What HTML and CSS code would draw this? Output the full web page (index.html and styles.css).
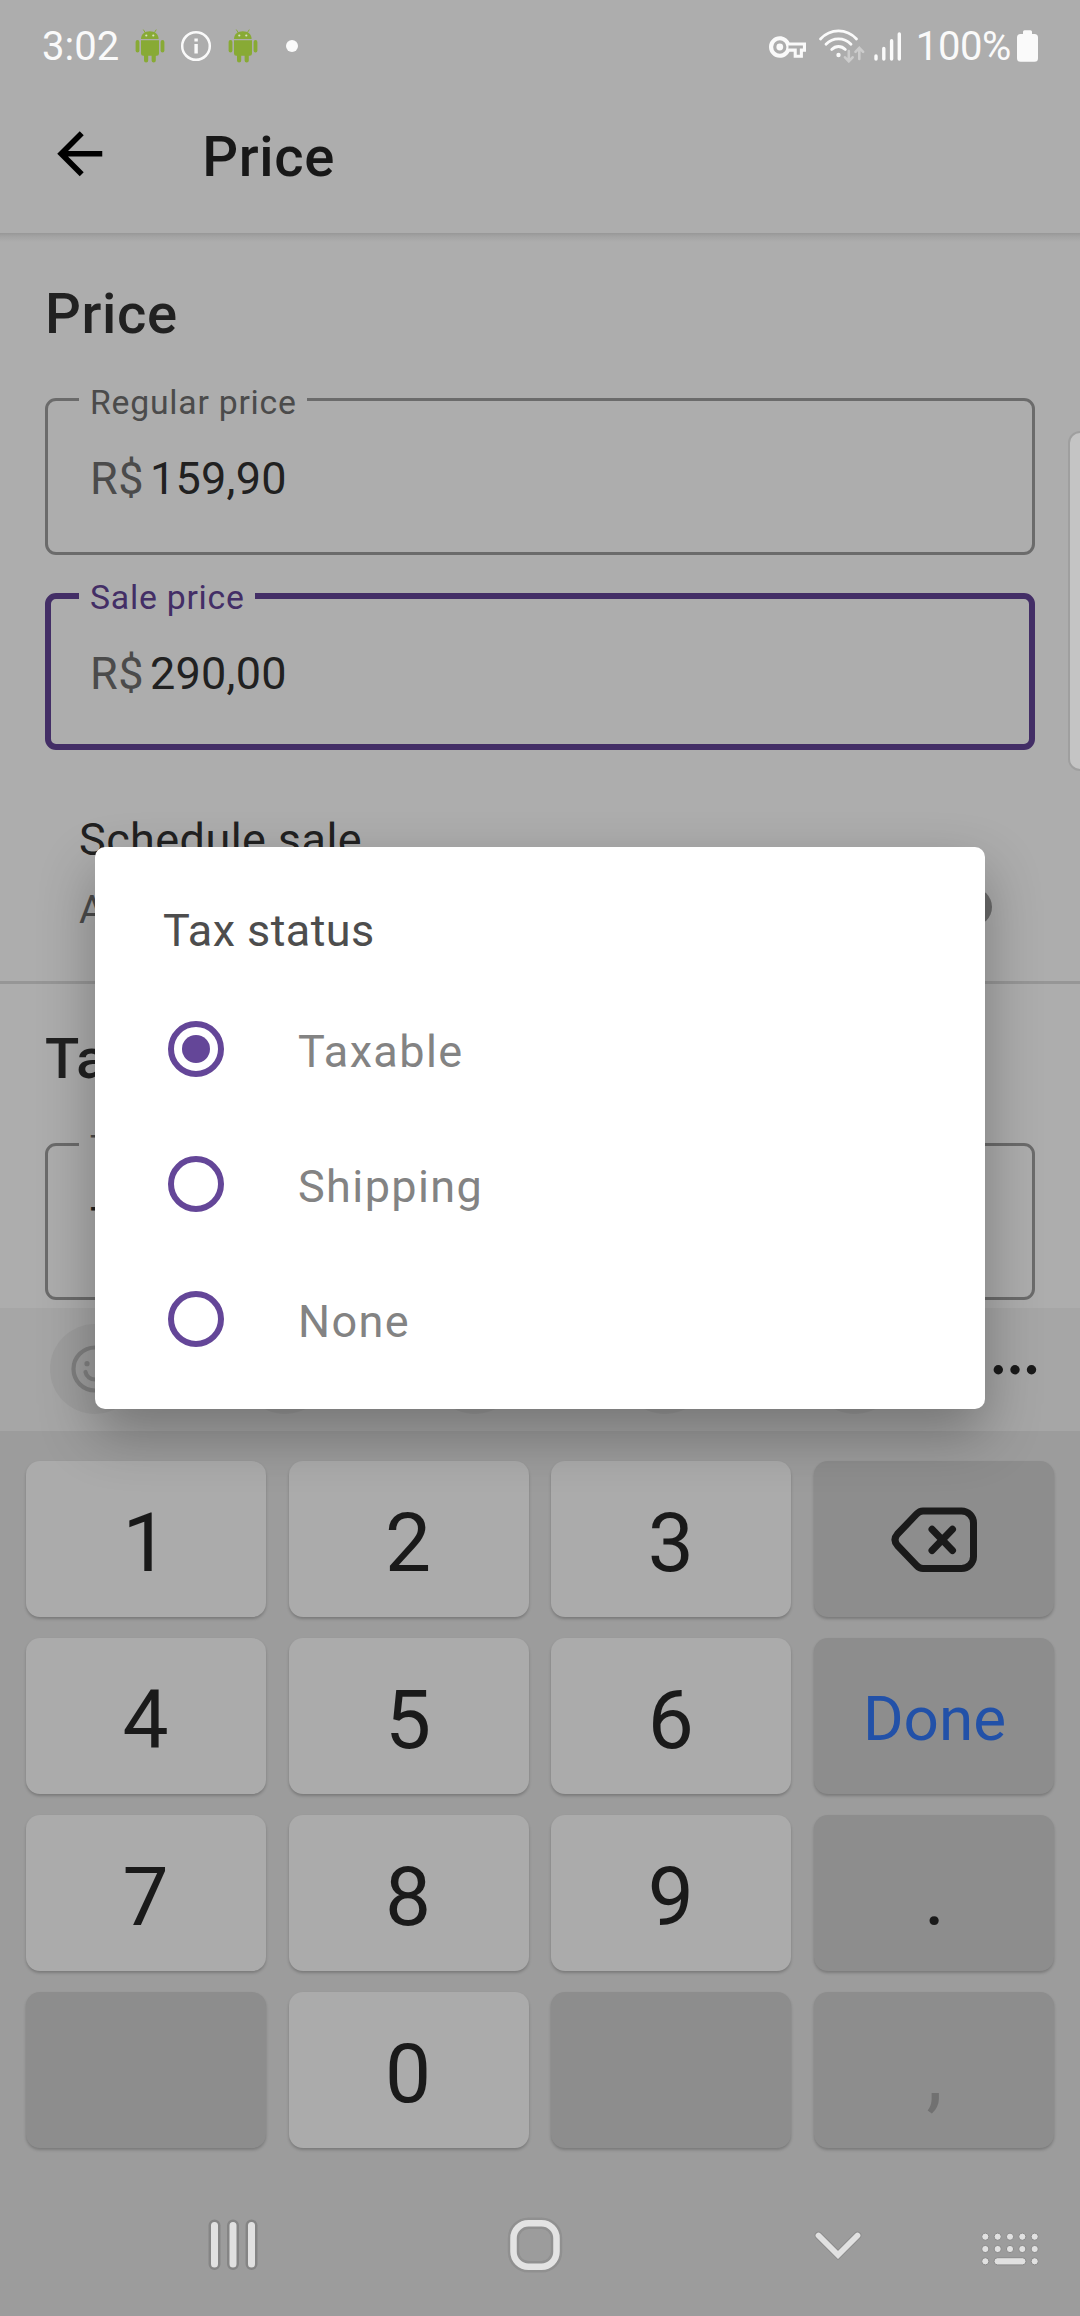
FILE: index.html
```html
<!DOCTYPE html>
<html lang="en">
<head>
<meta charset="utf-8">
<title>Price</title>
<link rel="stylesheet" href="styles.css">
</head>
<body>
<svg class="defs" width="0" height="0" aria-hidden="true">
  <symbol id="android" viewBox="0 0 30 34">
    <path d="M6 10C6 5 10 2.3 14.8 2.3S23.600 5 23.600 10Z"/>
    <path d="M8.300.6l1.900 3M21.300.6l-1.900 3" stroke="#88aa35" stroke-width="1" fill="none"/>
    <circle cx="11.300" cy="6.500" r="1.100" fill="#d8e2c0"/><circle cx="18.300" cy="6.500" r="1.100" fill="#d8e2c0"/>
    <path d="M6 11.200h18V24.500a2.200 2.200 0 0 1-2.200 2.200H20.800V31.500a2 2 0 0 1-4.200 0V26.700H13.200V31.500a2 2 0 0 1-4.200 0V26.700H8.200A2.200 2.200 0 0 1 6 24.500Z"/>
    <rect x=".6" y="11" width="3.800" height="12.500" rx="1.900"/><rect x="25.600" y="11" width="3.800" height="12.500" rx="1.900"/>
  </symbol>
</svg>

<main class="screen">
  <header class="status">
    <span class="clock">3:02</span>
    <svg class="droid" width="30" height="34"><use href="#android"/></svg>
    <svg class="info" width="32" height="32" viewBox="0 0 32 32"><circle cx="16" cy="16" r="13.800" fill="none" stroke="#fafafa" stroke-width="2.500"/><path d="M14.400 8.500h3.400v3h-3.400zM14.400 14h3.400v9.500h-3.400z" fill="#fafafa"/></svg>
    <svg class="droid" width="30" height="34"><use href="#android"/></svg>
    <i class="more-dot"></i>
    <div class="status-right">
      <svg class="key-icon" width="37" height="22" viewBox="0 5 24 14"><path fill="#fafafa" fill-rule="evenodd" d="M22 19h-6v-4h-2.680c-1.140 2.420-3.600 4-6.320 4-3.860 0-7-3.140-7-7s3.140-7 7-7c2.720 0 5.170 1.580 6.320 4H24v6h-2v4zm-4-2h2v-4h2v-2H11.940l-.23-.67C11.010 8.340 9.110 7 7 7c-2.760 0-5 2.240-5 5s2.240 5 5 5c2.110 0 4.010-1.340 4.710-3.330l.23-.67H18v4z"/><circle cx="7" cy="12" r="5" fill="none" stroke="#fafafa" stroke-width="1.400"/><circle cx="7" cy="12" r="2.200" fill="#fafafa"/></svg>
      <svg class="wifi" width="47" height="34" viewBox="0 0 47 34" fill="none" stroke="#fafafa" stroke-width="2.800" stroke-linecap="round"><path d="M2.500 10C12.500-.8 28.500-.8 38.500 10M8 15.200c7-7.200 18-7.200 25 0M13.700 20.500c4-4 9.600-4 13.600 0"/><circle cx="20.500" cy="26" r="2.200" fill="#fafafa" stroke="none"/><g stroke="#cccccc" stroke-width="2.600"><path d="M30.800 22v10M27 28.300l3.800 4 3.800-4M41.300 30V20M37.500 22.800l3.800-4 3.800 4"/></g></svg>
      <svg class="signal" width="28" height="32" viewBox="0 0 28 32" stroke="#fafafa" stroke-width="3.400" stroke-linecap="round"><path d="M2 26v3M9.800 18.500v10.500M17.600 10.700V29M25.300 4v25"/></svg>
      <span class="percent">100%</span>
      <svg class="battery" width="21" height="32" viewBox="0 0 21 32" fill="#fafafa"><path d="M7.500.3h6a1.500 1.500 0 0 1 1.500 1.500V4h2.500A3.500 3.500 0 0 1 21 7.500v20.800a3.500 3.500 0 0 1-3.500 3.500h-14A3.500 3.500 0 0 1 0 28.300V7.500A3.500 3.500 0 0 1 3.500 4H6V1.800A1.500 1.500 0 0 1 7.500.3Z"/></svg>
    </div>
  </header>

  <nav class="appbar">
    <svg width="67.500" height="67.500" viewBox="0 0 24 24"><path d="M20 11H7.830l5.590-5.590L12 4l-8 8 8 8 1.410-1.410L7.830 13H20v-2z"/></svg>
    <h1>Price</h1>
  </nav>

  <section class="content">
    <h2>Price</h2>
    <div class="field"><label>Regular price</label><span class="prefix">R$</span><span>159,90</span></div>
    <div class="field focused"><label>Sale price</label><span class="prefix">R$</span><span>290,00</span></div>
    <div class="schedule">
      <div class="schedule-text"><p class="primary">Schedule sale</p><p class="secondary">Auto</p></div>
      <i class="switch"></i>
    </div>
    <hr>
    <h2 class="tax">Tax</h2>
    <div class="field"><label>Tax status</label><span>Taxable</span></div>
  </section>

  <section class="keyboard">
    <div class="tools">
      <i class="tool"><svg width="48" height="48" viewBox="0 0 48 48" fill="none" stroke="#808080" stroke-width="4.200" stroke-linecap="round"><circle cx="24" cy="24" r="21.500"/><path d="M14.500 27c2 10 17 10 19 0"/><circle cx="16" cy="18.700" r="2.600" fill="#808080" stroke="none"/><circle cx="32" cy="18.700" r="2.600" fill="#808080" stroke="none"/></svg></i>
      <i class="tool"></i><i class="tool"></i><i class="tool"></i><i class="tool"></i>
      <svg class="dots" width="44" height="12" viewBox="0 0 44 12" fill="#1a1a1a"><circle cx="5.300" cy="6.800" r="4.700"/><circle cx="22" cy="6.800" r="4.700"/><circle cx="38.500" cy="6.800" r="4.700"/></svg>
    </div>
    <div class="keys">
      <b>1</b><b>2</b><b>3</b>
      <b class="fn"><svg class="backspace" width="86" height="66" viewBox="0 0 86 66" fill="none" stroke="#1a1a1a" stroke-width="7" stroke-linecap="round" stroke-linejoin="round"><path d="M32 4H70.500A12 12 0 0 1 82.500 16V49.500A12 12 0 0 1 70.500 61.500H32Q28.500 61.500 25.500 58.300L6.500 38.500Q1.500 32.800 6.500 27L25.500 7.200Q28.500 4 32 4Z"/><path d="M41 22.300L61.500 43.500M61.500 22.300L41 43.500"/></svg></b>
      <b>4</b><b>5</b><b>6</b><b class="fn done">Done</b>
      <b>7</b><b>8</b><b>9</b><b class="fn">.</b>
      <b class="fn"></b><b>0</b><b class="fn"></b><b class="fn muted">,</b>
    </div>
  </section>

  <footer class="navbar">
    <svg class="recents" width="52" height="54" viewBox="0 0 52 54" fill="none" stroke-linecap="round"><path d="M7.500 7.500V46M26 7.500V46M44.500 7.500V46" stroke="#858585" stroke-width="12"/><path d="M7.500 7.500V46M26 7.500V46M44.500 7.500V46" stroke="#e1e1e1" stroke-width="7"/></svg>
    <svg class="home" width="56" height="58" viewBox="0 0 56 58" fill="none"><rect x="6.500" y="7.200" width="43" height="43.600" rx="15" stroke="#909090" stroke-width="11.500"/><rect x="6.500" y="7.200" width="43" height="43.600" rx="15" stroke="#e3e3e3" stroke-width="6.500"/></svg>
    <svg class="hide" width="50" height="32" viewBox="0 0 50 32" fill="none" stroke-linecap="round"><path d="M5.500 5.500L25 25L44.500 5.500" stroke="#8b8b8b" stroke-width="7.600"/><path d="M5.500 5.500L25 25L44.500 5.500" stroke="#e1e1e1" stroke-width="5.800"/></svg>
    <svg class="ime" width="60" height="34" viewBox="0 0 60 34" fill="#e1e1e1" stroke="#8a8a8a" stroke-width="1"><g id="r"><circle cx="5.300" cy="4.700" r="3.600"/><circle cx="17.700" cy="4.700" r="3.600"/><circle cx="30" cy="4.700" r="3.600"/><circle cx="42.300" cy="4.700" r="3.600"/><circle cx="54.700" cy="4.700" r="3.600"/></g><use href="#r" y="12.300"/><circle cx="5.300" cy="29.300" r="3.600"/><rect x="14" y="25.700" width="32" height="7.200" rx="3.600"/><circle cx="54.700" cy="29.300" r="3.600"/></svg>
  </footer>

  <i class="edge-handle"></i>

  <div class="dialog">
    <h3>Tax status</h3>
    <div class="option"><i class="radio on"></i><span>Taxable</span></div>
    <div class="option"><i class="radio"></i><span>Shipping</span></div>
    <div class="option"><i class="radio"></i><span>None</span></div>
  </div>
</main>
</body>
</html>
```
FILE: styles.css
```css
* { box-sizing: border-box; margin: 0; padding: 0; }
body { font-family: Roboto, sans-serif; background: #adadad; }
.defs { display: block; }
svg { display: block; flex: none; }
h1, h2, h3, b, i { font-style: normal; font-weight: 400; }

.screen {
  position: relative;
  display: flex;
  flex-direction: column;
  width: 1080px;
  height: 2316px;
  overflow: hidden;
  color: #212121;
}

/* status bar */
.status { display: flex; align-items: center; height: 75px; padding: 17px 42px 0 42px; color: #fafafa; font-size: 40px; line-height: 48px; }
.clock { width: 78px; padding-top: 2px; }
.droid { margin-left: 15px; fill: #88aa35; }
.info { margin-left: 15px; }
.info + .droid { margin-left: 16px; }
.more-dot { width: 12px; height: 12px; margin-left: 28px; border-radius: 50%; background: #fafafa; }
.status-right { display: flex; align-items: center; margin-left: auto; }
.percent { padding-top: 2px; letter-spacing: -.4px; }
.key-icon { margin: 2px 12px 0 0; }
.wifi { margin-right: 9px; }
.signal { margin-right: 14px; }
.battery { margin-left: 6px; }

/* app bar */
.appbar { display: flex; align-items: center; height: 158px; padding-left: 45.750px; }
.appbar h1 { margin: 5px 0 0 89px; font-size: 56.250px; line-height: 60px; font-weight: 500; letter-spacing: .6px; color: #181818; }

/* form */
.content {
  display: flex;
  flex-direction: column;
  height: 1075px;
  padding: 51px 45px 0;
  overflow: hidden;
  background: linear-gradient(#979797, #a2a2a2 3px, #adadad 9px);
}
.content h2 { margin-bottom: 54px; font-size: 56.250px; line-height: 60px; font-weight: 500; letter-spacing: .6px; }
.field {
  position: relative;
  flex: none;
  display: flex;
  height: 157px;
  margin-bottom: 38px;
  padding: 50px 42px 0;
  border: 3px solid #6b6b6b;
  border-radius: 11px;
  font-size: 45px;
  line-height: 56px;
  letter-spacing: .25px;
}
.field label {
  position: absolute;
  left: 31px;
  top: -18px;
  padding: 0 10px 0 11px;
  background: #adadad;
  color: #4b4b4b;
  font-size: 33.750px;
  line-height: 40px;
  letter-spacing: .76px;
}
.prefix { width: 60px; letter-spacing: .6px; color: #4b4b4b; }
.field.focused { padding: 47px 39px 0; border: 6px solid #432e66; }
.field.focused label { left: 28px; top: -21px; color: #432e66; }
.schedule { display: flex; justify-content: space-between; margin: 22px 43px 0 34px; }
.primary { font-size: 45px; line-height: 60px; letter-spacing: .42px; }
.secondary { margin-top: 16px; font-size: 39.400px; line-height: 48px; letter-spacing: .7px; color: #4b4b4b; }
.switch { width: 38px; height: 38px; margin-top: 78px; border-radius: 50%; background: #6b6b6b; }
hr { flex: none; height: 3px; margin: 47px -45px 45px; border: 0; background: #969696; }
.content .tax { margin-bottom: 54px; }

/* keyboard */
.keyboard { position: relative; height: 840px; background: #9c9c9c; }
.tools { display: flex; align-items: center; gap: 100px; height: 123px; padding: 0 0 1px 50px; background: #a6a6a6; }
.tool { display: flex; align-items: center; justify-content: center; flex: none; width: 90px; height: 90px; border-radius: 50%; background: #9e9e9e; }
.dots { margin-left: -7px; }
.keys { display: grid; grid-template-columns: repeat(4, 240px); grid-auto-rows: 156px; gap: 21px 22.670px; padding: 30px 26px 0; }
.keys b {
  display: flex;
  align-items: center;
  justify-content: center;
  padding: 7px 1px 0 0;
  border-radius: 14px;
  background: #ababab;
  box-shadow: 0 2px 3px rgba(0, 0, 0, .22);
  color: #1a1a1a;
  font-size: 82px;
  line-height: 96px;
}
.keys .fn { padding: 7px 0 0 1px; background: #8d8d8d; }
.keys .done { padding: 5px 0 0 1px; color: #2251a8; font-size: 62px; }
.keys .muted { color: #717171; }
.backspace { margin-top: -6px; }

/* navigation bar */
.navbar { display: flex; align-items: flex-start; flex: 1; background: #9c9c9c; padding-left: 207px; }
.recents { margin-top: 70px; }
.home { margin: 68px 0 0 248px; }
.hide { margin: 82px 0 0 250px; }
.ime { margin: 84px 0 0 117px; }

.edge-handle {
  position: absolute;
  left: 1068px;
  top: 431px;
  width: 24px;
  height: 340px;
  border: 2px solid #9f9f9f;
  border-radius: 12px;
  background: #c4c4c4;
}

/* dialog */
.dialog {
  position: absolute;
  left: 95px;
  top: 847px;
  width: 890px;
  height: 562px;
  padding: 54px 68px 0;
  border-radius: 10px;
  background: #fff;
  box-shadow: 0 24px 56px rgba(0, 0, 0, .3);
}
.dialog h3 { margin-bottom: 14px; font-size: 45px; line-height: 60px; letter-spacing: .42px; color: #4d4d4d; }
.option { display: flex; align-items: center; height: 135px; padding-left: 5px; font-size: 45px; letter-spacing: 1.400px; color: #838383; }
.option span { margin: 17px 0 0 74px; }
.radio { display: flex; width: 56px; height: 56px; margin-top: 13px; border: 6px solid #644698; border-radius: 50%; }
.radio.on::after { content: ""; width: 28px; height: 28px; margin: auto; border-radius: 50%; background: #644698; }
```
